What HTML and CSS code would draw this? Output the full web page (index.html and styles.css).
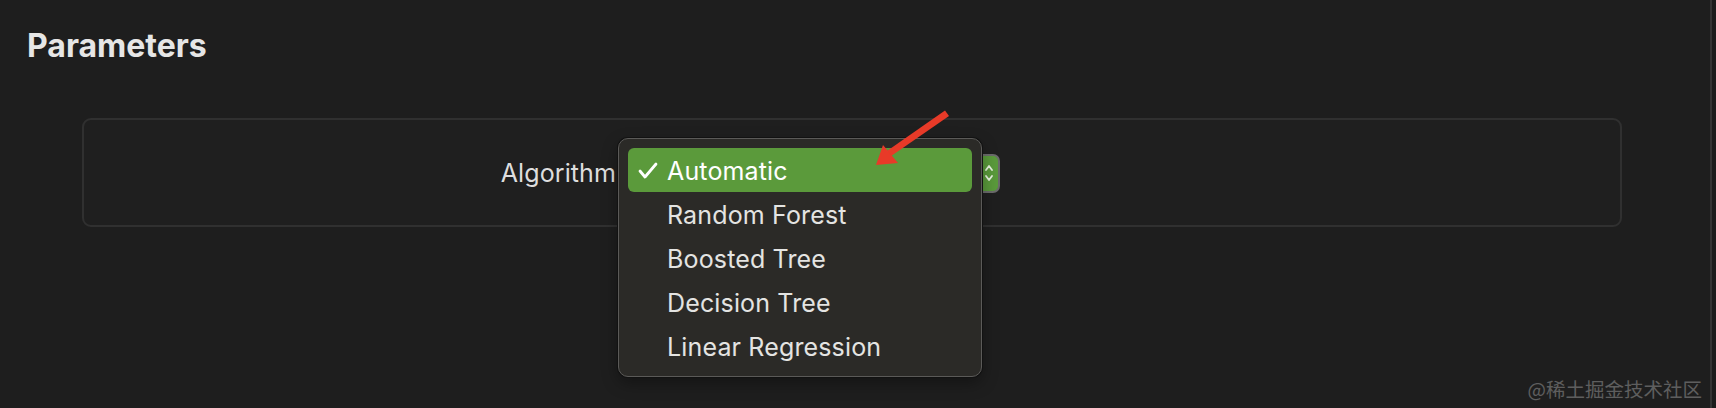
FILE: index.html
```html
<!DOCTYPE html>
<html>
<head>
<meta charset="utf-8">
<link rel="stylesheet" href="styles.css">
</head>
<body>
<div class="window">
  <main class="content">
    <h1 class="title">Parameters</h1>
    <section class="card">
      <div class="row">
        <span class="label">Algorithm</span>
        <div class="popup">
          <svg class="chevrons" width="10" height="22" viewBox="0 0 10 22">
            <path d="M2 8 L5 4 L8 8" fill="none" stroke="#e8f3e0" stroke-width="1.8" stroke-linecap="round" stroke-linejoin="round"/>
            <path d="M2 14 L5 18 L8 14" fill="none" stroke="#e8f3e0" stroke-width="1.8" stroke-linecap="round" stroke-linejoin="round"/>
          </svg>
        </div>
      </div>
      <div class="menu">
        <div class="item selected">
          <svg class="check" width="20" height="17" viewBox="0 0 20 17">
            <path d="M2 9 L7 15 L18 2" fill="none" stroke="#ffffff" stroke-width="2.8" stroke-linecap="round" stroke-linejoin="round"/>
          </svg>
          <span>Automatic</span>
        </div>
        <div class="item"><span>Random Forest</span></div>
        <div class="item"><span>Boosted Tree</span></div>
        <div class="item"><span>Decision Tree</span></div>
        <div class="item"><span>Linear Regression</span></div>
      </div>
    </section>
  </main>
  <div class="edge"></div>
  <div class="edge-gap"></div>
  <svg class="arrow" width="100" height="80" viewBox="860 100 100 80">
    <path d="M945 110.5 L949 116 L889 157.5 L885.5 152 Z" fill="#e83a28"/>
    <path d="M876 165 L883 145 L898 163 Z" fill="#e83a28"/>
  </svg>
  <div class="watermark">@稀土掘金技术社区</div>
</div>
</body>
</html>
```

FILE: styles.css
```css
* { box-sizing: border-box; }

html, body {
  margin: 0;
  padding: 0;
  background: #1e1e1e;
}

body {
  font-family: Inter, "Noto Sans", "Liberation Sans", "Noto Sans CJK SC", sans-serif;
  color: #e2e2e2;
  width: 1716px;
  height: 408px;
  overflow: hidden;
}

.window {
  position: relative;
  display: flex;
  height: 408px;
}

.content {
  width: 1710px;
  padding: 0 0 0 27px;
}

.edge {
  width: 2px;
  background: #343434;
}

.edge-gap {
  width: 4px;
  background: #1c1c1c;
}

.title {
  margin: 0;
  padding-top: 27px;
  height: 118px;
  font-size: 32px;
  font-weight: 700;
  color: #e6e6e6;
  line-height: 38px;
}

.card {
  position: relative;
  margin-left: 55px;
  width: 1540px;
  height: 109px;
  border: 2px solid #303030;
  border-radius: 9px;
  background: #1f1f1f;
  display: flex;
  align-items: center;
}

.row {
  display: grid;
  grid-template-columns: 532px 380px;
  column-gap: 4px;
  align-items: center;
  width: 100%;
}

.label {
  justify-self: end;
  font-size: 25px;
  letter-spacing: 0.1px;
  color: #dedede;
}

.popup {
  height: 39px;
  margin-top: 1px;
  background: #5a9a3b;
  border: 2px solid #6b6b6b;
  border-radius: 7px;
  display: flex;
  align-items: center;
  justify-content: flex-end;
  padding: 0 4px 0 12px;
}

.chevrons { display: block; }

.menu {
  position: absolute;
  left: 534px;
  top: 18px;
  width: 364px;
  height: 239px;
  padding: 9px 9px;
  background: #2b2a27;
  border: 1px solid #5b5a58;
  border-radius: 10px;
  box-shadow: 0 0 0 1px #121212, 0 6px 16px rgba(0, 0, 0, 0.35);
  display: flex;
  flex-direction: column;
}

.item {
  height: 44px;
  flex: none;
  display: flex;
  align-items: center;
  padding-left: 39px;
  padding-top: 2px;
  font-size: 25px;
  letter-spacing: 0.15px;
  color: #e4e4e2;
  position: relative;
  border-radius: 6px;
}

.item.selected {
  background: #5b9a3b;
  color: #ffffff;
}

.check {
  position: absolute;
  left: 10px;
  top: 14px;
}

.arrow {
  position: absolute;
  left: 860px;
  top: 100px;
}

.watermark {
  position: absolute;
  right: 14px;
  bottom: 7px;
  font-family: "Noto Sans CJK SC", "Noto Sans", sans-serif;
  font-size: 19.5px;
  color: #5e5e5e;
  line-height: 24px;
}
```
